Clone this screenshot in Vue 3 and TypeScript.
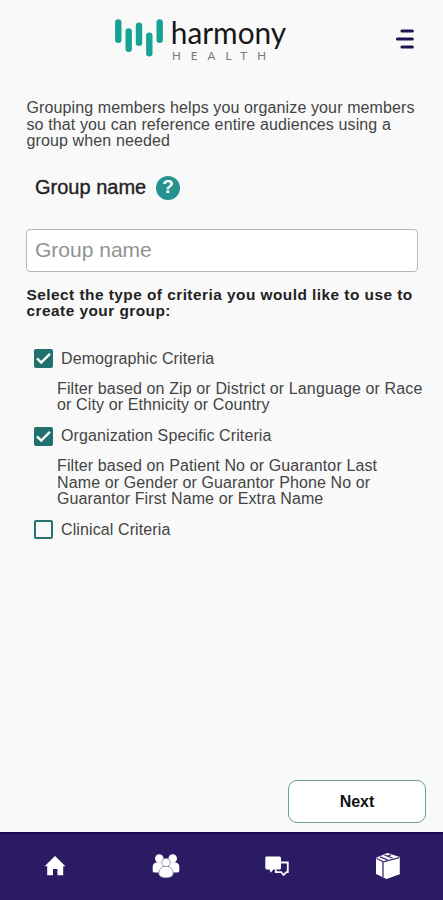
<script setup lang="ts">
import { ref } from 'vue'

interface Criterion {
  id: string
  label: string
  checked: boolean
  lines: string[]
}

const groupName = ref('')
const intro = [
  'Grouping members helps you organize your members',
  'so that you can reference entire audiences using a',
  'group when needed',
]
const criteria = ref<Criterion[]>([
  {
    id: 'demographic',
    label: 'Demographic Criteria',
    checked: true,
    lines: ['Filter based on Zip or District or Language or Race', 'or City or Ethnicity or Country'],
  },
  {
    id: 'organization',
    label: 'Organization Specific Criteria',
    checked: true,
    lines: [
      'Filter based on Patient No or Guarantor Last',
      'Name or Gender or Guarantor Phone No or',
      'Guarantor First Name or Extra Name',
    ],
  },
  { id: 'clinical', label: 'Clinical Criteria', checked: false, lines: [] },
])
</script>

<template>
  <div class="screen">
    <header class="header">
      <svg class="logo" width="190" height="54" viewBox="0 0 190 54" role="img" aria-label="harmony health">
        <g stroke="#16a394" stroke-width="6.4" stroke-linecap="round">
          <path d="M6.3 12.4V29.8M16.7 21.4V38.8M27 15.6V32.8M37.3 25.6V43.2M47.7 12.4V29.8" />
        </g>
        <text class="word" x="58.8" y="33.5" textLength="115.4" lengthAdjust="spacingAndGlyphs">harmony</text>
        <text class="sub" x="60" y="49.5" textLength="94">HEALTH</text>
      </svg>
      <button class="menu" aria-label="Menu">
        <svg width="20" height="22" viewBox="0 0 20 22">
          <path d="M7 3H17.3M2.5 11H17.3M7 19H17.3" stroke="#21124f" stroke-width="3.2" stroke-linecap="round" />
        </svg>
      </button>
    </header>

    <main class="content">
      <p class="intro"><span v-for="line in intro" :key="line" class="line">{{ line }}</span></p>

      <div class="field-label">
        <label for="group-name">Group name</label>
        <span class="help">?</span>
      </div>
      <input id="group-name" v-model="groupName" class="input" type="text" placeholder="Group name" />

      <p class="question">
        <span class="line">Select the type of criteria you would like to use to</span>
        <span class="line">create your group:</span>
      </p>

      <section v-for="item in criteria" :key="item.id" class="criterion">
        <div class="option" @click="item.checked = !item.checked">
          <span class="box" :class="{ checked: item.checked }">
            <svg v-if="item.checked" width="19" height="19" viewBox="0 0 19 19">
              <path d="M3 9.4L7.2 13.6L15.9 4.9" fill="none" stroke="#fff" stroke-width="2.4" />
            </svg>
          </span>
          <span>{{ item.label }}</span>
        </div>
        <p v-if="item.lines.length" class="description">
          <span v-for="line in item.lines" :key="line" class="line">{{ line }}</span>
        </p>
      </section>
    </main>

    <div class="actions"><button class="next">Next</button></div>

    <nav class="nav">
      <a class="tab" aria-label="Home">
        <svg width="24" height="22" viewBox="0 0 24 22">
          <path d="M12 1L22.5 11.2H20.2V20.3H14.4V14H10V20.3H4.2V11.2H1.7Z" fill="#fff" />
        </svg>
      </a>
      <a class="tab" aria-label="Members">
        <svg width="28" height="26" viewBox="0 0 28 26" fill="#fff">
          <circle cx="7.3" cy="5.5" r="4.3" /><circle cx="20.7" cy="5.5" r="4.3" />
          <path d="M.7 18V14Q.7 9.7 5 9.3H11V19.5H3Q.7 19.5.7 18ZM27.3 18V14Q27.3 9.7 23 9.3H17V19.5H25Q27.3 19.5 27.3 18Z" />
          <g stroke="#8d82ae" stroke-width=".8">
            <circle cx="14" cy="9.5" r="4.1" />
            <path d="M14 13.2C9.5 13.2 6.8 16.4 6.8 21Q8 24.8 14 24.8T21.2 21C21.2 16.4 18.5 13.2 14 13.2Z" />
          </g>
        </svg>
      </a>
      <a class="tab" aria-label="Messages">
        <svg width="26" height="22" viewBox="0 0 26 22">
          <path d="M16.5 7.5H23.8V17.2H22.3L19.6 20L17.2 17.2H11.8V14.5" fill="none" stroke="#fff" stroke-width="1.8" />
          <path d="M2 1.5H15.5Q17 1.5 17 3V13Q17 14.5 15.5 14.5H9.4L6.7 17.7L5.5 14.5H3Q1.3 14.5 1.3 13V3Q1.3 1.5 2 1.5Z" fill="#fff" />
        </svg>
      </a>
      <a class="tab" aria-label="Packages">
        <svg width="26" height="28" viewBox="0 0 26 28">
          <path d="M1 5.8L12.5.9L24.8 5V22.3L11.5 27L1 22Z" fill="#fff" />
          <path d="M1.5 6.2L8.3 9.8L24.3 5.6M8 9.8V25M5 4.9L12.5 7.9M9.5 3.2L17.5 6M12.2 4.4L16 2.8" fill="none" stroke="#3f2f72" stroke-width="1.3" />
        </svg>
      </a>
    </nav>
  </div>
</template>

<style>
body { margin: 0; background: #f9f9f9; }
</style>

<style scoped>
.screen {
  display: flex;
  flex-direction: column;
  height: 900px;
  background: #f9f9f9;
  color: #444;
  font-family: "Liberation Sans", Arial, sans-serif;
  font-size: 16px;
  line-height: 16.5px;
  overflow: hidden;
}
.header { display: flex; justify-content: space-between; padding: 10px 28px 0 112px; height: 89px; box-sizing: border-box; }
.logo { display: block; overflow: visible; }
.word { font-family: Lato, sans-serif; font-size: 31px; fill: #171717; }
.sub { font-family: Lato, sans-serif; font-size: 11.5px; fill: #777; }
button { font-family: inherit; }
.menu { border: 0; padding: 0; background: none; height: 22px; margin-top: 18px; }
.menu svg { display: block; }
.content { flex: 1; padding: 11px 0 0 26px; }
p { margin: 0; }
.line { display: block; white-space: nowrap; }
.intro { margin-left: 0.5px; letter-spacing: 0.12px; }
.field-label {
  display: flex;
  align-items: center;
  gap: 10px;
  height: 24px;
  margin: 26px 0 0 9px;
  font-size: 20px;
  color: #222;
  -webkit-text-stroke: 0.35px #222;
}
.help {
  display: flex;
  align-items: center;
  justify-content: center;
  width: 24px;
  height: 24px;
  border-radius: 50%;
  background: #269391;
  color: #fff;
  font-size: 19px;
  font-weight: bold;
  -webkit-text-stroke: 0;
}
.input {
  display: block;
  box-sizing: border-box;
  width: 392px;
  height: 43px;
  margin-top: 29px;
  padding: 0 8px;
  border: 1px solid #b5b8b8;
  border-radius: 4px;
  background: #fff;
  font-family: inherit;
  font-size: 21px;
}
.input::placeholder { color: #929292; opacity: 1; }
.question { margin: 15px 0 29.4px 0.5px; font-size: 15.4px; font-weight: bold; letter-spacing: 0.47px; color: #222; }
.option { display: flex; align-items: center; gap: 8px; height: 20px; margin-left: 8px; letter-spacing: 0.11px; }
.box { box-sizing: border-box; width: 19px; height: 19px; border: 2px solid #24736e; border-radius: 2px; }
.box.checked { border: 0; background: #20716d; }
.box svg { display: block; }
.description { margin: 12px 0 12.3px 31px; letter-spacing: 0.12px; }
.actions { display: flex; justify-content: flex-end; padding: 0 17px 9px 0; }
.next {
  width: 138px;
  height: 43px;
  border: 1px solid #6d9f91;
  border-radius: 9px;
  background: #fff;
  color: #111;
  font-size: 16px;
  font-weight: bold;
}
.nav {
  display: grid;
  grid-template-columns: repeat(4, 1fr);
  align-items: center;
  box-sizing: border-box;
  height: 68px;
  padding-bottom: 2px;
  border-top: 2px solid #180c4c;
  background: #2a1b64;
}
.tab { display: flex; justify-content: center; }
.tab svg { display: block; }
</style>
